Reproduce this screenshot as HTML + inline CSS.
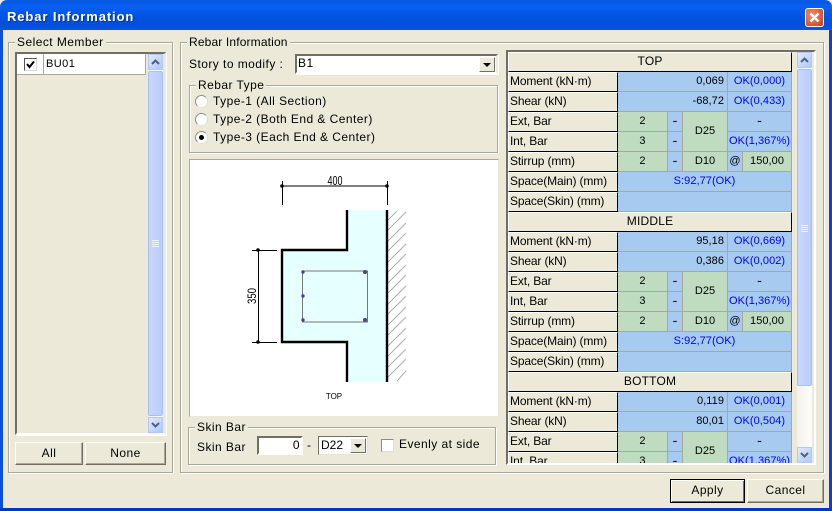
<!DOCTYPE html>
<html><head><meta charset="utf-8"><style>
html,body{margin:0;padding:0;width:832px;height:511px;overflow:hidden;background:#ece9d8}
*{box-sizing:border-box}
body{font-family:"Liberation Sans",sans-serif;font-size:12px;color:#000;position:relative;letter-spacing:.45px}
.a{position:absolute;white-space:nowrap}
.grp{position:absolute;border:1px solid #aca899;box-shadow:1px 1px 0 #fff,inset 1px 1px 0 #fff}
.lg{position:absolute;background:#ece9d8;padding:0 2px;line-height:14px;white-space:nowrap}
.btn{position:absolute;background:#ece9d8;border:1px solid;border-color:#fff #716f64 #716f64 #fff;box-shadow:inset -1px -1px 0 #aca899;text-align:center;font-size:12px}
.sb{position:absolute;width:15px;background:linear-gradient(90deg,#f3f1ec,#fdfdfa)}
.ar{position:absolute;left:0;width:15px;height:16px;background:linear-gradient(135deg,#e1eafe,#aec8f7);border:1px solid #fff;outline:1px solid #b4c8f6;outline-offset:-1px}
.th{position:absolute;left:0;width:15px;background:linear-gradient(90deg,#c9d7fb,#b8cdf9);border:1px solid #fff;outline:1px solid #a9bff2;outline-offset:-1px;border-radius:2px}
.rd{position:absolute;width:13px;height:13px;border-radius:50%;background:#fff;border:1px solid;border-color:#8e8c80 #e0ddd0 #e8e5d8 #8e8c80}
table{border-collapse:separate;border-spacing:0;table-layout:fixed;width:284px}
td{height:20px;padding:0 0 1px;font-size:11px;line-height:17px;overflow:hidden;white-space:nowrap;border-right:1px solid #aca899;border-bottom:1px solid #aca899;text-align:center;letter-spacing:.05px}
td.l{background:#ece9d8;text-align:left;padding-left:1px;font-size:12px;border:1px solid;border-color:#fff #000 #000 #fff;letter-spacing:-.15px}
td.h{background:#ece9d8;border:1px solid;border-color:#fff #000 #000 #fff;letter-spacing:.2px;font-size:12px}
td.b{background:#a6caf0}
td.g{background:#c0dcc0}
td.r{text-align:right;padding-right:3px}
td.o{color:#00f}
td.d{font-family:"DejaVu Sans",sans-serif;font-size:13px}
</style></head><body>

<div class="a" style="left:0;top:0;width:832px;height:30px;border-radius:7px 7px 0 0;background:linear-gradient(180deg,#0a5bdc 0,#0558ee 3px,#0a62f0 6px,#0355e6 14px,#0150dc 24px,#0a55d8 30px)"></div>
<div class="a" style="left:7px;top:8px;font-weight:bold;font-size:13px;color:#fff;line-height:18px;letter-spacing:.9px;text-shadow:1px 1px 0 #0b2f90">Rebar Information</div>
<div class="a" style="left:805px;top:8px;width:19px;height:19px;border-radius:3px;border:1px solid #fff;background:radial-gradient(circle at 35% 35%,#ee9070,#d9532a 70%,#c03a12)"><svg width="17" height="17" style="display:block"><path d="M4.500 4.500L12.500 12.500M12.500 4.500L4.500 12.500" stroke="#fff" stroke-width="2.400"/></svg></div>
<div class="a" style="left:0;top:30px;width:3px;height:481px;background:#0a4fe0"></div>
<div class="a" style="left:829px;top:30px;width:3px;height:481px;background:#0a3fd0"></div>
<div class="a" style="left:0;top:508px;width:832px;height:3px;background:#0635c4"></div>

<!-- Select Member -->
<div class="grp" style="left:8px;top:42px;width:165px;height:431px"></div>
<div class="lg" style="left:15px;top:35px">Select Member</div>
<div class="a" style="left:15px;top:52px;width:151px;height:383px;border:2px solid;border-color:#716f64 #ece9d8 #fff #716f64;outline:0;box-shadow:1px 1px 0 #fff"></div>
<div class="a" style="left:17px;top:54px;width:129px;height:21px;background:#fff;border-bottom:1px solid #aca899;border-right:1px solid #aca899"></div>
<div class="a" style="left:43px;top:54px;width:1px;height:20px;background:#aca899"></div>
<div class="a" style="left:24px;top:58px;width:13px;height:13px;background:#fff;border:1px solid;border-color:#555 #ddd #ddd #555"><svg width="11" height="11" style="display:block"><path d="M2 5L4.500 8L9 2.500" fill="none" stroke="#000" stroke-width="2"/></svg></div>
<div class="a" style="left:46px;top:57px;line-height:15px;font-size:11px">BU01</div>
<div class="sb" style="left:148px;top:54px;height:380px">
<div class="ar" style="top:0"><svg width="13" height="14" style="display:block"><path d="M3 9L6.500 5.500L10 9" fill="none" stroke="#4d6185" stroke-width="2"/></svg></div>
<div class="th" style="top:17px;height:345px"><svg width="13" height="345" style="display:block" shape-rendering="crispEdges"><path d="M3 168.500h7M3 170.500h7M3 172.500h7M3 174.500h7" stroke="#eef3ff"/></svg></div>
<div class="ar" style="top:363px"><svg width="13" height="14" style="display:block"><path d="M3 5L6.500 8.500L10 5" fill="none" stroke="#4d6185" stroke-width="2"/></svg></div>
</div>
<div class="btn" style="left:15px;top:442px;width:68px;height:23px;line-height:20px">All</div>
<div class="btn" style="left:85px;top:442px;width:81px;height:23px;line-height:20px">None</div>

<!-- Rebar Information -->
<div class="grp" style="left:180px;top:42px;width:644px;height:431px"></div>
<div class="lg" style="left:187px;top:35px;letter-spacing:.15px">Rebar Information</div>
<div class="a" style="left:189px;top:57px;line-height:15px">Story to modify :</div>
<div class="a" style="left:295px;top:54px;width:203px;height:20px;background:#fff;border:2px solid;border-color:#716f64 #ece9d8 #fff #716f64;box-shadow:1px 1px 0 #fff;padding-left:1px;line-height:15px">B1
<div class="a" style="left:182px;top:1px;width:16px;height:15px;background:#ece9d8;border:1px solid;border-color:#fff #716f64 #716f64 #fff"><svg width="14" height="13" style="display:block"><path d="M3 5h8L7 9z" fill="#000"/></svg></div></div>

<div class="grp" style="left:189px;top:85px;width:309px;height:68px"></div>
<div class="lg" style="left:196px;top:78px">Rebar Type</div>
<div class="rd" style="left:195px;top:95px"></div><div class="a" style="left:213px;top:94px;line-height:15px">Type-1 (All Section)</div>
<div class="rd" style="left:195px;top:113px"></div><div class="a" style="left:213px;top:112px;line-height:15px">Type-2 (Both End &amp; Center)</div>
<div class="rd" style="left:195px;top:131px"><div class="a" style="left:3px;top:3px;width:5px;height:5px;border-radius:50%;background:#000"></div></div><div class="a" style="left:213px;top:130px;line-height:15px">Type-3 (Each End &amp; Center)</div>

<div class="a" style="left:189px;top:159px;width:310px;height:258px;background:#fff;border:1px solid;border-color:#aca899 #ece9d8 #ece9d8 #aca899"></div>
<svg class="a" style="left:0;top:0;letter-spacing:0" width="832" height="511">
<path d="M347 210V250H282V342H347V382H387V210z" fill="#e6ffff"/>
<g stroke="#888" stroke-width="1" stroke-dasharray="1 .4">
<path d="M388 220L397 211M388 230L406 212M388 241L406 223M388 251L406 233M388 262L406 244M388 272L406 254M388 283L406 265M388 293L406 275M388 304L406 286M388 314L406 296M388 325L406 307M388 335L406 317M388 346L406 328M388 356L406 338M388 367L406 349M388 377L406 359M397 381L406 371"/>
</g>
<path d="M347 210V250H282V342H347V382M387 210V382" fill="none" stroke="#000" stroke-width="2.400"/>
<rect x="302.500" y="271" width="65" height="51" fill="none" stroke="#777" stroke-width="1"/>
<g fill="#4a3f90"><circle cx="303" cy="272" r="1.700"/><circle cx="365" cy="272" r="2"/><circle cx="303" cy="296" r="1.700"/><circle cx="303" cy="320" r="1.700"/><circle cx="365" cy="320" r="2"/></g>
<path d="M282 186H387M282.500 181V205M387.500 181V205M258.500 250V342M252 250.500H277M252 342.500H277" stroke="#000" fill="none"/>
<g fill="#000"><circle cx="282" cy="186" r="1.800"/><circle cx="387" cy="186" r="1.800"/><circle cx="258" cy="250" r="1.800"/><circle cx="258" cy="342" r="1.800"/></g>
<text x="335" y="185" text-anchor="middle" font-family="Liberation Sans" font-size="13" textLength="15" lengthAdjust="spacingAndGlyphs">400</text>
<text transform="translate(256,296) rotate(-90)" text-anchor="middle" font-family="Liberation Sans" font-size="12" textLength="16" lengthAdjust="spacingAndGlyphs">350</text>
<text x="334" y="399" text-anchor="middle" font-family="Liberation Sans" font-size="8">TOP</text>
</svg>

<div class="grp" style="left:188px;top:427px;width:308px;height:38px"></div>
<div class="lg" style="left:195px;top:420px">Skin Bar</div>
<div class="a" style="left:197px;top:440px;line-height:15px">Skin Bar</div>
<div class="a" style="left:257px;top:436px;width:46px;height:19px;background:#fff;border:2px solid;border-color:#716f64 #fff #fff #716f64;text-align:right;line-height:14px;padding-right:1px">0</div>
<div class="a" style="left:307px;top:438px;line-height:15px">-</div>
<div class="a" style="left:318px;top:436px;width:50px;height:19px;background:#fff;border:1px solid #e5e2d5;border-top-color:#716f64;border-left-color:#716f64;padding-left:2px;line-height:16px;letter-spacing:0">D22
<div class="a" style="left:31px;top:1px;width:16px;height:15px;background:#ece9d8;border:1px solid;border-color:#fff #716f64 #716f64 #fff"><svg width="14" height="13" style="display:block"><path d="M3 5h8L7 9z" fill="#000"/></svg></div></div>
<div class="a" style="left:381px;top:439px;width:13px;height:13px;background:#fff;border:1px solid;border-color:#8e8c80 #e0ddd0 #e0ddd0 #8e8c80"></div>
<div class="a" style="left:399px;top:437px;line-height:15px">Evenly at side</div>

<!-- Grid -->
<div class="a" style="left:506px;top:50px;width:310px;height:415px;background:#ece9d8;border:2px solid;border-color:#716f64 #fff #fff #716f64;overflow:hidden">
<table>
<colgroup><col style="width:110px"><col style="width:50px"><col style="width:15px"><col style="width:45px"><col style="width:15px"><col style="width:49px"></colgroup>
<tr><td class="h" colspan="6">TOP</td></tr>
<tr><td class="l">Moment (kN·m)</td><td class="b r" colspan="3">0,069</td><td class="b o" colspan="2">OK(0,000)</td></tr>
<tr><td class="l">Shear (kN)</td><td class="b r" colspan="3">-68,72</td><td class="b o" colspan="2">OK(0,433)</td></tr>
<tr><td class="l">Ext, Bar</td><td class="g">2</td><td class="b d">-</td><td class="g" rowspan="2">D25</td><td class="b d" colspan="2">-</td></tr>
<tr><td class="l">Int, Bar</td><td class="g">3</td><td class="b d">-</td><td class="b o" colspan="2">OK(1,367%)</td></tr>
<tr><td class="l">Stirrup (mm)</td><td class="g">2</td><td class="b d">-</td><td class="g">D10</td><td class="b">@</td><td class="g">150,00</td></tr>
<tr><td class="l">Space(Main) (mm)</td><td class="b o" colspan="5">S:92,77(OK)</td></tr>
<tr><td class="l">Space(Skin) (mm)</td><td class="b" colspan="5"></td></tr>
<tr><td class="h" colspan="6">MIDDLE</td></tr>
<tr><td class="l">Moment (kN·m)</td><td class="b r" colspan="3">95,18</td><td class="b o" colspan="2">OK(0,669)</td></tr>
<tr><td class="l">Shear (kN)</td><td class="b r" colspan="3">0,386</td><td class="b o" colspan="2">OK(0,002)</td></tr>
<tr><td class="l">Ext, Bar</td><td class="g">2</td><td class="b d">-</td><td class="g" rowspan="2">D25</td><td class="b d" colspan="2">-</td></tr>
<tr><td class="l">Int, Bar</td><td class="g">3</td><td class="b d">-</td><td class="b o" colspan="2">OK(1,367%)</td></tr>
<tr><td class="l">Stirrup (mm)</td><td class="g">2</td><td class="b d">-</td><td class="g">D10</td><td class="b">@</td><td class="g">150,00</td></tr>
<tr><td class="l">Space(Main) (mm)</td><td class="b o" colspan="5">S:92,77(OK)</td></tr>
<tr><td class="l">Space(Skin) (mm)</td><td class="b" colspan="5"></td></tr>
<tr><td class="h" colspan="6">BOTTOM</td></tr>
<tr><td class="l">Moment (kN·m)</td><td class="b r" colspan="3">0,119</td><td class="b o" colspan="2">OK(0,001)</td></tr>
<tr><td class="l">Shear (kN)</td><td class="b r" colspan="3">80,01</td><td class="b o" colspan="2">OK(0,504)</td></tr>
<tr><td class="l">Ext, Bar</td><td class="g">2</td><td class="b d">-</td><td class="g" rowspan="2">D25</td><td class="b d" colspan="2">-</td></tr>
<tr><td class="l">Int, Bar</td><td class="g">3</td><td class="b d">-</td><td class="b o" colspan="2">OK(1,367%)</td></tr>
</table>
</div>
<div class="sb" style="left:797px;top:52px;height:411px">
<div class="ar" style="top:0"><svg width="13" height="14" style="display:block"><path d="M3 9L6.500 5.500L10 9" fill="none" stroke="#4d6185" stroke-width="2"/></svg></div>
<div class="th" style="top:17px;height:317px"><svg width="13" height="317" style="display:block" shape-rendering="crispEdges"><path d="M3 155.500h7M3 157.500h7M3 159.500h7M3 161.500h7" stroke="#eef3ff"/></svg></div>
<div class="ar" style="top:395px"><svg width="13" height="14" style="display:block"><path d="M3 5L6.500 8.500L10 5" fill="none" stroke="#4d6185" stroke-width="2"/></svg></div>
</div>

<div class="btn" style="left:670px;top:479px;width:75px;height:24px;line-height:21px;border:1px solid #000;box-shadow:inset 1px 1px 0 #fff,inset -1px -1px 0 #716f64">Apply</div>
<div class="btn" style="left:747px;top:479px;width:77px;height:24px;line-height:21px">Cancel</div>
</body></html>
